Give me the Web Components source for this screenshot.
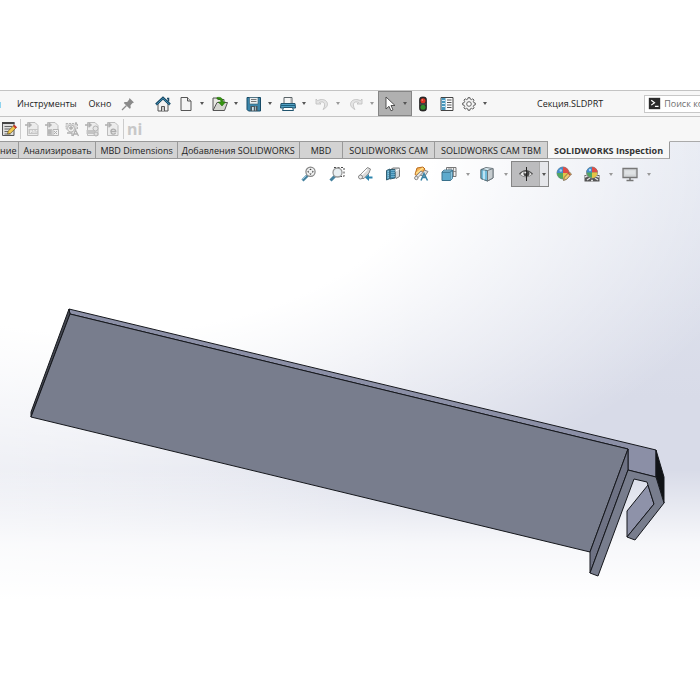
<!DOCTYPE html>
<html lang="ru">
<head>
<meta charset="utf-8">
<title>Секция.SLDPRT</title>
<style>
html, body { margin: 0; background: #fff; }
body { font-family: "Open Sans", "Noto Sans", sans-serif; font-size: 9px; line-height: 12px; color: #1c1c1c; min-height: 100vh; overflow-x: hidden; }
</style>
</head>
<body>
<cad-window></cad-window>
<script>
const ICONS = {
home: '<path d="M3 8v7h10V8L8 3z" fill="#f2f2f2" stroke="#555"/><path d="M6.500 15v-4.500h3V15" fill="#c9c9c9" stroke="#555"/><path d="M1 8.500 8 2l7 6.500" fill="none" stroke="#184a66" stroke-width="2.400"/><path d="M1.500 8.300 8 2.300l6.500 6" fill="none" stroke="#4ba0c8" stroke-width=".8"/><path d="M12 2.500h1.500v3" fill="none" stroke="#184a66" stroke-width="1.500"/>',
page: '<path d="M3 1.500h6.500l3.500 3.500v9.500H3z" fill="#f4f4f4" stroke="#555" stroke-linejoin="round"/><path d="M9.500 1.500V5H13" fill="#ddd" stroke="#555"/>',
open: '<path d="M1 2h4l1 1.500h6V14H1z" fill="#e8e8e2" stroke="#555"/><path d="M1 14.500 5 6.500h10.500l-3 8z" fill="#d5d6d0" stroke="#555"/><path d="M5 1.500c4-.7 6 1 6 4.500h2.500L10 10 6.300 6H9C9 4 7.500 2.800 5 3z" fill="#36950f" stroke="#23700c" stroke-width=".6"/>',
save: '<path d="M1 1.500h13.500V15H2.500L1 13.500z" fill="#3a86ab" stroke="#174a66"/><path d="M3.500 1.500h8.500v6.500H3.500z" fill="#e9eef0" stroke="#385b6b" stroke-width=".6"/><path d="M5 3.500h5.500M5 5.500h5.500" stroke="#777"/><path d="M4.500 10h7v5h-7z" fill="#4c565b"/><path d="M6 11h1.800v3.500H6z" fill="#c7e2ee"/><path d="M9.500 10.500v4" stroke="#9eb7c2"/>',
print: '<path d="M4 1.500h8V8H4z" fill="#f5f5f5" stroke="#5b6468"/><path d="M1 7.500h14l.5 4.500H.5z" fill="#50a0c4" stroke="#20536d"/><path d="M1 9.500h14" stroke="#1e617f"/><path d="M3.500 11.500h9l1 3h-11z" fill="#fff" stroke="#20536d"/><path d="M11 2v5" stroke="#aaa"/>',
undo: '<path d="M2 3v5h5L5.500 6.500C9 5 11 6.500 10.500 10c-.2 1.500-.8 2.500-1.500 3.500C13.500 11.500 14.500 8 12.500 5.500 10.500 3 6.500 3 3.700 4.700z" fill="#e4e4e4" stroke="#bdbdbd" stroke-width=".8"/>',
redo: '<path d="M14 3v5H9l1.500-1.500C7 5 5 6.500 5.500 10c.2 1.500.8 2.500 1.500 3.500C2.500 11.500 1.500 8 3.500 5.500 5.500 3 9.500 3 12.300 4.700z" fill="#e4e4e4" stroke="#bdbdbd" stroke-width=".8"/>',
pointer: '<path d="M4 1v12l3-2.700 2 4.500 2-1-2-4.300h4z" fill="#fff" stroke="#444" stroke-width=".9"/>',
traffic: '<rect x="4.500" y="1" width="7" height="14" rx="2.500" fill="#2c2a29" stroke="#171717" stroke-width=".7"/><circle cx="8" cy="4.700" r="2.500" fill="#e03223"/><circle cx="8" cy="11.300" r="2.500" fill="#318d29"/><circle cx="7.300" cy="4" r=".8" fill="#ff9b83"/><path d="M4.500 8h7" stroke="#555"/>',
list: '<path d="M2 1.500h12v13H2z" fill="#fafafa" stroke="#444"/><path d="M2.500 2h4v12h-4z" fill="#4797bd"/><path d="M3 4.500h3M3 7.500h3M3 10.500h3" stroke="#d4edf8"/><path d="M8 4h4.500M8 6.500h4.500M8 9h4.500M8 11.500h4.500" stroke="#555"/>',
gear: '<path d="m6.800 3 .3-1.400h1.800l.3 1.400 1.400.6 1.200-.8 1.300 1.300-.8 1.200.6 1.400 1.400.3v1.900l-1.400.3-.6 1.400.8 1.200-1.300 1.300-1.200-.8-1.400.6-.3 1.400H7.100l-.3-1.400-1.400-.6-1.200.8-1.300-1.300.8-1.200-.6-1.400-1.400-.3V7l1.400-.3.6-1.400-.8-1.200 1.300-1.300 1.200.8z" fill="#f3f3f3" stroke="#5f5f5f"/><circle cx="8" cy="8" r="2.300" fill="#fff" stroke="#666"/>',
pin: '<path d="M9.500 2 14 6.500l-1.400.5-2.100 2.300.2 2.700-1 .7L3.800 7l.8-1 2.600.1L9 3.800z" fill="#8a8a8a"/><path d="M6.500 9.500 2 14" stroke="#8a8a8a" stroke-width="1.200"/>',
note: '<path d="M1.500 1.500h11.500v13H1.500z" fill="#dedede" stroke="#555"/><path d="M1 2h12.500" stroke="#444" stroke-width="2"/><path d="M3.500 5.500h7.500M3.500 8h6M3.500 10.500h4M3.500 13h6" stroke="#666"/><path d="m6.500 13 .7-3L13 4.300l2.400 2.200-5.800 5.800z" fill="#f1c94f" stroke="#665323" stroke-width=".7"/><path d="m12 5.300 1.500-1.500L16 6.200l-1.500 1.400z" fill="#cb382e"/>',
pdf: '<path d="M3.500 1.500H11l3 3v10H3.500z" fill="#ececec" stroke="#bcbcbc"/><path d="M1 4h5M4.500 1.700 7 4 4.500 6.300" fill="none" stroke="#b0b0b0" stroke-width="1.500"/><path d="M4.500 8h9.500v5H4.500z" fill="#c6c6c6"/><path d="M6.500 12V9.500h1V11M9 12V9.500h1.200V12M12 12V9.500h1.300" fill="none" stroke="#f5f5f5" stroke-width=".8"/>',
xls: '<path d="M3.500 1.500H11l3 3v10H3.500z" fill="#ececec" stroke="#bcbcbc"/><path d="M1 4h5M4.500 1.700 7 4 4.500 6.300" fill="none" stroke="#b0b0b0" stroke-width="1.500"/><path d="M3 8h5v6H3z" fill="#c2c2c2"/><path d="M9 8.500h5.500v6H9z" fill="#f1f1f1" stroke="#b4b4b4"/><path d="m10 10 3 3m0-3-3 3M4 10h3M4 12h3" stroke="#ababab"/>',
balloon: '<path d="M2 2.500h11.500V8H2z" fill="#dadada" stroke="#b8b8b8" stroke-dasharray="2 1"/><circle cx="7" cy="7.500" r="3.500" fill="#eee" stroke="#b8b8b8"/><path d="M5 7h4M7 5v4M3 12h5v3M9 15l2.500-6 3 6M10 13h4M12 1v3" fill="none" stroke="#b0b0b0" stroke-width="1.300"/>',
pdf2: '<path d="M3.500 1.500H11l3 3v10H3.500z" fill="#ececec" stroke="#bcbcbc"/><path d="M1 4h5M4.500 1.700 7 4 4.500 6.300" fill="none" stroke="#b0b0b0" stroke-width="1.500"/><path d="M2.500 9h9v4h-9z" fill="#c4c4c4"/><circle cx="11.500" cy="7.500" r="2.500" fill="#e6e6e6" stroke="#b4b4b4"/><circle cx="12" cy="13" r="2" fill="#ddd" stroke="#b4b4b4"/>',
edraw: '<path d="M3.500 1.500H11l3 3v10H3.500z" fill="#ececec" stroke="#bcbcbc"/><path d="M1 4h5M4.500 1.700 7 4 4.500 6.300" fill="none" stroke="#b0b0b0" stroke-width="1.500"/><path d="M6.800 10.500h5c0-3.300-4.900-3.300-4.900 0 0 3 3.300 3.200 4.700 1.500" fill="none" stroke="#adadad" stroke-width="1.300"/>',
fit: '<path d="M6.500 9.500 1.500 14.500" stroke="#45819e" stroke-width="3"/><path d="m5.500 9.500-4 4" stroke="#94c7df"/><circle cx="9.500" cy="5.800" r="4.600" fill="#f0f1f1" stroke="#858585" stroke-width="1.200"/><path d="M9.500 2.500 8.300 4h2.400zM9.500 9.100l-1.200-1.500h2.400zM6.200 5.800l1.500-1.200V7zM12.800 5.800l-1.500-1.200V7z" fill="#444"/>',
area: '<path d="M5 1.500h10v9H8" fill="none" stroke="#444" stroke-dasharray="2 1.500"/><path d="m6 10-4.500 4.500" stroke="#45819e" stroke-width="3"/><circle cx="8.500" cy="6.500" r="4.500" fill="#e8eef1" stroke="#999" stroke-width="1.300"/>',
prev: '<path d="m2 10 8.500-8.500 3 1.500-1.500 4-5 5.500H3z" fill="#dadada" stroke="#888"/><path d="m4 9.500 6-6" stroke="#fff" stroke-width="1.500"/><circle cx="3.500" cy="11" r="2" fill="#eee" stroke="#888"/><path d="M15.500 11.500H11" stroke="#2c84ad" stroke-width="2"/><path d="m12 8-4 3.500 4 3.500z" fill="#2c84ad"/>',
section: '<path d="M5 4 8 2h6.500v8.500l-3.500 2-1-1V6z" fill="#d5d8da" stroke="#777"/><path d="M1.500 4.500 5 3v9.500L1.500 14z" fill="#5aa2c1" stroke="#335f73"/><path d="M5 3.500h5V12L5 13z" fill="#3b8ab1" stroke="#335f73"/><path d="M7 4v8M9 4v7M3.300 5v7" stroke="#9bd0e6" stroke-dasharray="1 1"/><path d="M10.500 5 14.500 3" stroke="#fff"/>',
views: '<path d="m7 9 3-5.500 5 2-3.500 5z" fill="#ddd" stroke="#888"/><path d="M2 8.500 4 2l6-1 2 2-3 4-5 3z" fill="#f6b255" stroke="#b96d20"/><path d="M3 7.500 10 2" stroke="#ffe492" stroke-width="1.500"/><path d="m2 11 6-6 2 1.500-6 6z" fill="#e5e5e5" stroke="#888"/><circle cx="3.300" cy="12" r="1.700" fill="#eee" stroke="#888"/><path d="m8 14.500 3-7 3.500 7M9 11.500h4.500" fill="none" stroke="#3983a6" stroke-width="1.500"/>',
orient: '<path d="M5.500 1.500h9.500v9H5.500z" fill="#f1f1f1" stroke="#777"/><path d="M10 1.500v9M5.500 5.500H15M8 1.500v3M12.500 1.500v9" stroke="#777" stroke-width=".8"/><path d="M1 6h8.500v8.500H1z" fill="#5caacd" stroke="#38708b"/><path d="m1 6 2-2h8.500l-2 2zM9.500 6l2-2v8.500l-2 2" fill="#8bc6df" stroke="#38708b" stroke-width=".8"/>',
cube: '<path d="m2 3.500 5-2 7 1v9.500l-5.500 3L2 12.500z" fill="#dceef5" stroke="#6c777d"/><path d="m2 3.500 6.500 1V15L2 12.500z" fill="#71bcdc" stroke="#55717d"/><path d="m8.500 4.500 5.500-2V12l-5.500 3z" fill="#c6cccf" stroke="#6c777d"/><path d="M5 4.500v9" stroke="#e6f8ff" stroke-width="1.300"/>',
eye: '<path d="M1.500 8q6.500-7 13 0-6.500 6-13 0z" fill="#efefef" stroke="#888"/><path d="M1.500 8q6.500-7 13 0" fill="none" stroke="#555" stroke-width="1.200"/><circle cx="8.500" cy="7.500" r="3" fill="#444"/><path d="M8.500 1v14" stroke="#222"/><circle cx="7.200" cy="6.500" r="1" fill="#eee"/>',
appearance: '<circle cx="7" cy="7" r="6" fill="#3f8fd0" stroke="#888"/><path d="M7 7V1a6 6 0 0 1 6 6z" fill="#df4c47"/><path d="M7 7H1A6 6 0 0 1 7 1z" fill="#438dcb"/><path d="M7 7h6a6 6 0 0 1-6 6z" fill="#e3c448"/><path d="M1 7h6v6a6 6 0 0 1-6-6z" fill="#52a861"/><circle cx="4.800" cy="4.500" r="1.300" fill="#a8d2f2"/><path d="m7.500 14.500.8-3.200 5-5.300 2.200 2-5 5.400z" fill="#f0ca72" stroke="#6f6045" stroke-width=".8"/><path d="m12.200 7 2 2" stroke="#cb4739" stroke-width="1.500"/>',
scene: '<path d="M.5 9h15v6.500H.5z" fill="#555"/><path d="m1 11 3-1.500M3 14l3-2M7 14.500h2M11 12l3 2M12 10l3 1" stroke="#ddd" stroke-width="1.400"/><circle cx="8" cy="6.500" r="5.500" fill="#50a660" stroke="#888"/><path d="M8 6.500V1a5.500 5.500 0 0 1 5.500 5.500z" fill="#df4c47"/><path d="M8 6.500H2.500A5.500 5.500 0 0 1 8 1z" fill="#438dcb"/><path d="M8 6.500h5.500A5.500 5.500 0 0 1 8 12z" fill="#e3c448"/><circle cx="6" cy="4" r="1.200" fill="#a8d2f2"/>',
monitor: '<path d="M1 2.500h14v9H1z" fill="#d3d6d8" stroke="#777" stroke-width="1.300"/><path d="M3 4.500h10v4H3z" fill="#dfe2e4"/><path d="M8 12v2.500M4.500 14.500h7" stroke="#777" stroke-width="1.600"/>',
prompt: '<path d="M1 1h14v14H1z" fill="#2b2b2b"/><path d="m4 4 4 3-4 3M8.500 11.500H13" fill="none" stroke="#fff" stroke-width="1.500"/>'
};

class CadIcon extends HTMLElement {
  connectedCallback() {
    const root = this.shadowRoot || this.attachShadow({ mode: "open" });
    root.innerHTML = `<style>:host{display:block;width:16px;height:16px;flex:none}svg{display:block;width:100%;height:100%}</style><svg viewBox="0 0 16 16" aria-hidden="true">${ICONS[this.getAttribute("name")]}</svg>`;
  }
}
customElements.define("cad-icon", CadIcon);

class ToolButton extends HTMLElement {
  connectedCallback() {
    const root = this.shadowRoot || this.attachShadow({ mode: "open" });
    const label = this.getAttribute("label"), split = this.hasAttribute("split");
    root.innerHTML = `<style>
      :host{display:flex;flex:none;align-items:center;box-sizing:border-box}
      button{appearance:none;border:0;margin:0;padding:0;background:none;color:inherit;font:inherit;display:grid;place-items:center;align-self:stretch}
      .main{width:18px}
      .drop{width:14px;margin-right:2px}
      .drop::before{content:"";border:2px solid transparent;border-top:3px solid #555;border-bottom:0}
      :host([off]) .drop::before,:host([quiet]) .drop::before{border-top-color:#999}
      :host([quiet]) .drop{width:20px;margin:0}
      :host([active]){background:#b0b0b0;border:1px solid #858585}
      :host([active]) .main{width:20px;padding-left:2px}
      :host([active]) .drop{width:12px;margin:0}
      :host([view][active]){background:#bcbcbe}
      :host([view][active]) .main{width:27px;padding:0}
      :host([view][active]) .drop{width:9px;background:#e6e7eb;border-left:1px solid #aaa}
    </style><button class="main" aria-label="${label}" title="${label}"><cad-icon name="${this.getAttribute("icon")}"></cad-icon></button>${split ? `<button class="drop" aria-label="${label}: список"></button>` : ""}`;
  }
}
customElements.define("tool-button", ToolButton);

const define = (name, html) => customElements.define(name, class extends HTMLElement {
  constructor() { super(); this.attachShadow({ mode: "open" }).innerHTML = html; }
});

define("menu-bar", `<style>
  :host{display:flex;height:25px;background:#f7f7f7;border-top:1px solid #c4c4c4;border-bottom:1px solid #c4c4c4;overflow:hidden}
  nav{display:flex;align-items:center;gap:12px;padding-left:16px;width:119px;box-sizing:border-box;flex:none;border-left:1px solid #8fd3ee;border-image:linear-gradient(transparent 45%,#8fd3ee 45%,#8fd3ee 65%,transparent 65%) 1;border-width:0 0 0 1px}
  .rule{width:1px;background:#c8c8c8}
  a{color:inherit;text-decoration:none}
  .tools{display:flex;padding-left:17px;flex:none}
  .title{flex:none;align-self:center;padding:0 41px 0 43px}
  tool-button[icon=page]{margin-left:5px}
  tool-button[active]{margin:0 2px 0 -3px}
  tool-button[icon=list]{margin:0 4px 0 6px}
  search-box{align-self:center}
</style>
<nav aria-label="Меню"><a href="#tools">Инструменты</a><a href="#window">Окно</a></nav>
<tool-button icon="pin" label="Закрепить меню"></tool-button><span class="rule"></span>
<div class="tools">
<tool-button icon="home" label="Домой"></tool-button>
<tool-button icon="page" label="Новый" split></tool-button>
<tool-button icon="open" label="Открыть" split></tool-button>
<tool-button icon="save" label="Сохранить" split></tool-button>
<tool-button icon="print" label="Печать" split></tool-button>
<tool-button icon="undo" label="Отменить" split off></tool-button>
<tool-button icon="redo" label="Повторить" split off></tool-button>
<tool-button icon="pointer" label="Выбрать" split active></tool-button>
<tool-button icon="traffic" label="Перестроить"></tool-button>
<tool-button icon="list" label="Свойства файла"></tool-button>
<tool-button icon="gear" label="Параметры" split></tool-button>
</div>
<span class="title">Секция.SLDPRT</span><search-box></search-box>`);

define("search-box", `<style>
  :host{display:flex;align-items:center;gap:3px;flex:1 0 160px;height:16px;padding-left:3px;background:#fff;border:1px solid #c8c8c8}
  cad-icon{width:13px;height:13px}
  input{appearance:none;font:inherit;line-height:12px;border:0;padding:0;width:130px;background:none;outline:0}
  input::placeholder{color:#707070;opacity:1}
</style><cad-icon name="prompt"></cad-icon><input type="search" aria-label="Поиск команд" placeholder="Поиск команд">`);

define("inspection-bar", `<style>
  :host{display:flex;align-items:center;height:24px;background:#f7f7f7;gap:2px}
  .rule{width:1px;height:20px;background:#ccc}
  tool-button{height:20px}
  .ni{appearance:none;border:0;background:none;padding:0 1px;font:bold 16px/20px "Noto Sans",sans-serif;color:#c8c8c8}
</style>
<tool-button icon="note" label="Новый проект"></tool-button><span class="rule"></span>
<tool-button icon="pdf" label="Экспорт в PDF"></tool-button>
<tool-button icon="xls" label="Экспорт в Excel"></tool-button>
<tool-button icon="balloon" label="Размеры"></tool-button>
<tool-button icon="pdf2" label="Экспорт в 3D PDF"></tool-button>
<tool-button icon="edraw" label="Экспорт в eDrawings"></tool-button>
<span class="rule"></span><button class="ni">ni</button>`);

define("command-tab", `<style>
  :host{display:flex;flex:none;--pad:6px}
  :host([tight]){--pad:4px}
  :host([wide]){--pad:11px}
  button{appearance:none;font:inherit;color:#222;margin:0;border:solid #999;border-width:1px 1px 1px 0;background:#d3d3d3;padding:2px var(--pad) 0;height:18px;white-space:nowrap}
  :host([first]) button{padding:2px 2px 0 0}
  :host([selected]) button{font-weight:700;color:#333;background:#f7f7f7;border-top-color:#f7f7f7;border-bottom-color:#aaa}
</style><button role="tab"><slot></slot></button>`);

define("tab-strip", `<style>
  :host{display:flex}
  .rest{flex:1;border-top:1px solid #aaa}
</style><slot></slot><span class="rest"></span>`);

define("view-toolbar", `<style>
  :host{display:flex;height:26px;padding:2px 0 0 300px;gap:10px}
  tool-button[quiet]{margin-right:-10px}
  tool-button[icon=cube]{margin-right:-15px}
  tool-button[active]{margin-right:-4px}
</style>
<tool-button icon="fit" label="Изменить в размер экрана"></tool-button>
<tool-button icon="area" label="Увеличить элементы вида"></tool-button>
<tool-button icon="prev" label="Предыдущий вид"></tool-button>
<tool-button icon="section" label="Разрез"></tool-button>
<tool-button icon="views" label="Динамические примечания"></tool-button>
<tool-button icon="orient" label="Ориентация вида" split quiet></tool-button>
<tool-button icon="cube" label="Стиль отображения" split quiet></tool-button>
<tool-button icon="eye" label="Скрыть или отобразить" split view active></tool-button>
<tool-button icon="appearance" label="Редактировать внешний вид"></tool-button>
<tool-button icon="scene" label="Применить сцену" split quiet></tool-button>
<tool-button icon="monitor" label="Настройки вида" split quiet></tool-button>`);

define("part-model", `<style>:host{display:block}svg{display:block;width:100%}</style>
<svg viewBox="0 187 700 423" role="img" aria-label="Модель: Секция">
<g stroke="#15171c" stroke-width="1" stroke-linejoin="round">
<path d="M69 309 656 450V477L628 470V449L70 314z" fill="#8b8fa6"/>
<path d="M656 450 664 477V503L656 477z" fill="#111317"/>
<path d="M69 309 31 412V417L70 314z" fill="#454852"/>
<path d="M70 314 628 449 590 552 31 417z" fill="#787d8d"/>
<path d="M628 449V470L590 573V552z" fill="#6e7284"/>
<path d="M648 485 654 504 627 537V511z" fill="#8e92a9"/>
<path d="M628 470 656 477 664 503 635 540 627 537 654 504 647 482 634 479 598 576 590 573z" fill="#787d8d"/>
</g></svg>`);

define("cad-window", `<style>
  :host{display:block;padding-top:90px}
  main{background:linear-gradient(180deg,#fff0 70%,#fffc 86%,#fff 98%),radial-gradient(640px 370px at 100px 0,#fff 52%,#fff0 108%),linear-gradient(90deg,#fff6,#fff0 60%),linear-gradient(180deg,#e2e6f0,#d8dbe8 55%)}
</style>
<menu-bar></menu-bar><inspection-bar></inspection-bar>
<main>
<tab-strip role="tablist">
<command-tab first>ние</command-tab><command-tab tight>Анализировать</command-tab><command-tab tight>MBD Dimensions</command-tab><command-tab tight>Добавления SOLIDWORKS</command-tab><command-tab wide>MBD</command-tab><command-tab>SOLIDWORKS CAM</command-tab><command-tab>SOLIDWORKS CAM TBM</command-tab><command-tab selected>SOLIDWORKS Inspection</command-tab>
</tab-strip>
<view-toolbar></view-toolbar>
<part-model></part-model>
</main>`);
</script>
</body>
</html>
